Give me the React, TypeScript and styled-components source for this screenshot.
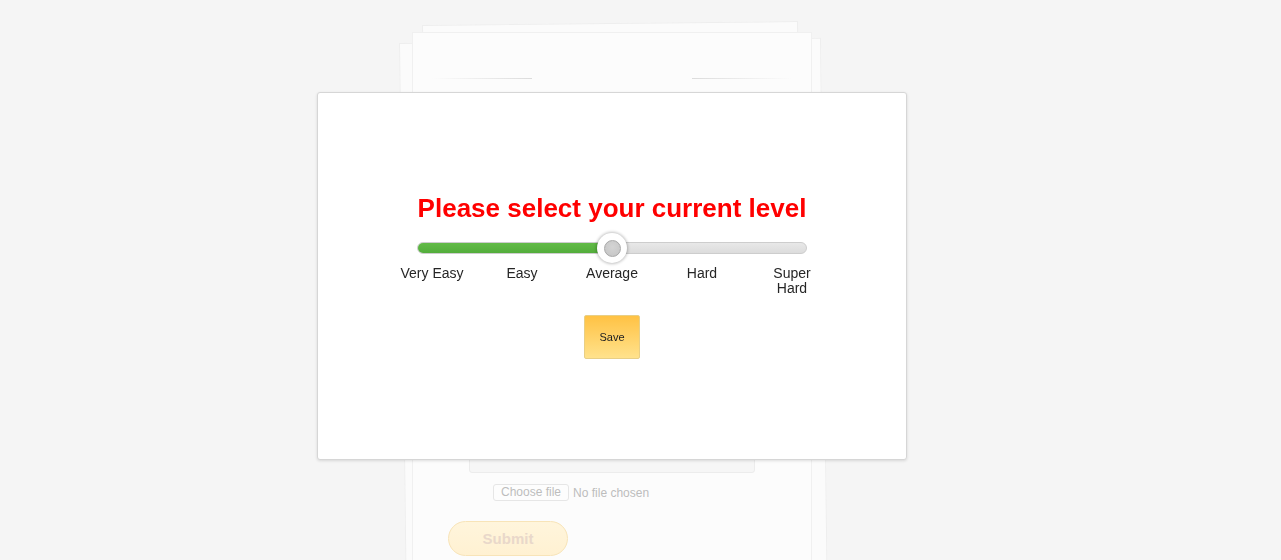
import React from "react";
import styled, { createGlobalStyle } from "styled-components";

const Global = createGlobalStyle`
  html, body { margin: 0; padding: 0; }
  body {
    background: #f5f5f5;
    font-family: "Liberation Sans", Arial, sans-serif;
    overflow: hidden;
  }
`;

const Page = styled.div`
  width: 1224px;
  height: 560px;
  overflow: hidden;
  display: flex;
  justify-content: center;
  padding-top: 32px;
  box-sizing: border-box;
`;

const Stack = styled.div`
  position: relative;
  width: 400px;
  height: 600px;
  flex-shrink: 0;
  &::before, &::after {
    content: "";
    position: absolute;
    background: #fbfbfb;
    border: 1px solid #eeeeee;
    box-sizing: border-box;
  }
  &::before {
    left: -13px;
    top: 11px;
    width: 422px;
    height: 620px;
    transform: rotate(-0.7deg);
    transform-origin: top left;
    z-index: 0;
  }
  &::after {
    left: 10px;
    top: -7px;
    width: 376px;
    height: 300px;
    transform: rotate(-0.6deg);
    transform-origin: top left;
    z-index: 1;
  }
`;

const Paper = styled.div`
  position: relative;
  z-index: 2;
  height: 100%;
  background: #fcfcfc;
  border: 1px solid #f0f0f0;
  box-sizing: border-box;
  display: flex;
  flex-direction: column;
  align-items: center;
`;

const HeadRow = styled.div`
  margin-top: 45px;
  width: 360px;
  display: flex;
  justify-content: space-between;
`;

const Rule = styled.div<{ $side: "left" | "right" }>`
  width: 100px;
  height: 1px;
  background: linear-gradient(
    ${(p) => (p.$side === "left" ? "to right" : "to left")},
    rgba(220, 220, 220, 0),
    #dcdcdc
  );
`;

const Textarea = styled.div`
  margin-top: 300px;
  width: 286px;
  height: 94px;
  box-sizing: border-box;
  background: #f6f6f6;
  border: 1px solid #ececec;
  border-radius: 3px;
`;

const FileRow = styled.div`
  margin-top: 11px;
  align-self: flex-start;
  margin-left: 80px;
  display: flex;
  align-items: center;
  gap: 4px;
  font-size: 12px;
  color: #bdbdbd;
`;

const FileButton = styled.div`
  height: 17px;
  box-sizing: border-box;
  border: 1px solid #e6e6e6;
  border-radius: 3px;
  background: #fdfdfd;
  padding: 0 7px;
  line-height: 15px;
`;

const Submit = styled.div`
  margin-top: 20px;
  align-self: flex-start;
  margin-left: 35px;
  width: 120px;
  height: 35px;
  box-sizing: border-box;
  border-radius: 18px;
  border: 1px solid #f8e4b8;
  background: linear-gradient(#fff5dc, #fff1d2);
  color: #e9d8ca;
  font-weight: bold;
  font-size: 15px;
  display: flex;
  align-items: center;
  justify-content: center;
`;

const Modal = styled.div`
  position: fixed;
  left: 317px;
  top: 92px;
  width: 590px;
  height: 368px;
  box-sizing: border-box;
  background: #ffffff;
  border: 1px solid #d6d6d6;
  border-radius: 3px;
  box-shadow: 0 1px 3px rgba(0, 0, 0, 0.12);
  z-index: 10;
  display: flex;
  flex-direction: column;
  align-items: center;
  padding-top: 100px;
`;

const Title = styled.h2`
  margin: 0;
  font-size: 26px;
  line-height: 30px;
  font-weight: bold;
  color: #ff0000;
`;

const Slider = styled.div`
  position: relative;
  margin-top: 10px;
  width: 390px;
  height: 30px;
  display: flex;
  align-items: center;
`;

const Track = styled.div`
  position: relative;
  width: 100%;
  height: 12px;
  box-sizing: border-box;
  border-radius: 6px;
  background: linear-gradient(#e8e8e8, #dcdcdc);
  border: 1px solid #cdcdcd;
  overflow: hidden;
`;

const Fill = styled.div`
  height: 100%;
  background: linear-gradient(#62bb47, #53ad3b);
`;

const Thumb = styled.div`
  position: absolute;
  top: 0;
  width: 30px;
  height: 30px;
  margin-left: -15px;
  box-sizing: border-box;
  border-radius: 50%;
  background: #ffffff;
  box-shadow: 0 0 3px 1px rgba(0, 0, 0, 0.24);
  display: flex;
  align-items: center;
  justify-content: center;
`;

const ThumbCore = styled.div`
  width: 17px;
  height: 17px;
  box-sizing: border-box;
  border-radius: 50%;
  background: radial-gradient(circle at 50% 40%, #d4d4d4, #c4c4c4);
  border: 1px solid #a8a8a8;
`;

const Labels = styled.div`
  margin-top: 3px;
  display: grid;
  grid-template-columns: repeat(5, 90px);
`;

const Label = styled.div<{ $narrow?: boolean }>`
  justify-self: center;
  text-align: center;
  font-size: 14px;
  line-height: 15px;
  color: #262626;
  max-width: ${(p) => (p.$narrow ? "66px" : "90px")};
`;

const SaveButton = styled.button`
  margin-top: 19px;
  width: 56px;
  height: 44px;
  box-sizing: border-box;
  border: 1px solid #e8cf86;
  border-radius: 2px;
  background: linear-gradient(#ffc244, #ffe28c);
  font-family: "Liberation Sans", Arial, sans-serif;
  font-size: 11px;
  color: #222222;
  padding: 0;
  cursor: pointer;
`;

const levels = ["Very Easy", "Easy", "Average", "Hard", "Super Hard"];
const value = 2;

export default function App() {
  const pct = (value / (levels.length - 1)) * 100;
  return (
    <>
      <Global />
      <Page>
        <Stack>
          <Paper>
            <HeadRow>
              <Rule $side="left" />
              <Rule $side="right" />
            </HeadRow>
            <Textarea />
            <FileRow>
              <FileButton>Choose file</FileButton>
              <span>No file chosen</span>
            </FileRow>
            <Submit>Submit</Submit>
          </Paper>
        </Stack>
      </Page>
      <Modal>
        <Title>Please select your current level</Title>
        <Slider>
          <Track>
            <Fill style={{ width: `${pct}%` }} />
          </Track>
          <Thumb style={{ left: `${pct}%` }}>
            <ThumbCore />
          </Thumb>
        </Slider>
        <Labels>
          {levels.map((l, i) => (
            <Label key={l} $narrow={i === levels.length - 1}>
              {l}
            </Label>
          ))}
        </Labels>
        <SaveButton>Save</SaveButton>
      </Modal>
    </>
  );
}
